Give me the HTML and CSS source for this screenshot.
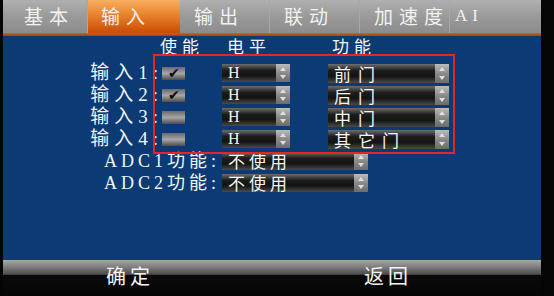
FILE: index.html
```html
<!DOCTYPE html>
<html lang="zh">
<head>
    <meta charset="UTF-8">
    <meta name="viewport" content="width=device-width, initial-scale=1.0">
    <title>输入设置</title>
    <link rel="stylesheet" href="styles.css">
</head>
<body>
    <div class="screen">
        <div class="tabs">
            <div class="tab tab-first">基本</div>
            <div class="tab active">输入</div>
            <div class="tab">输出</div>
            <div class="tab">联动</div>
            <div class="tab">加速度</div>
            <div class="tab tab-last">AI</div>
        </div>
        <div class="tab-line"></div>

        <div class="panel">
            <div class="head-row">
                <span class="head h-enable">使能</span>
                <span class="head h-level">电平</span>
                <span class="head h-func">功能</span>
            </div>

            <div class="row">
                <span class="label">输入1:</span>
                <span class="check on">&#10004;</span>
                <div class="select level"><span>H</span><i class="spin"></i></div>
                <div class="select func"><span>前门</span><i class="spin"></i></div>
            </div>
            <div class="row">
                <span class="label">输入2:</span>
                <span class="check on">&#10004;</span>
                <div class="select level"><span>H</span><i class="spin"></i></div>
                <div class="select func"><span>后门</span><i class="spin"></i></div>
            </div>
            <div class="row">
                <span class="label">输入3:</span>
                <span class="check"></span>
                <div class="select level"><span>H</span><i class="spin"></i></div>
                <div class="select func"><span>中门</span><i class="spin"></i></div>
            </div>
            <div class="row">
                <span class="label">输入4:</span>
                <span class="check"></span>
                <div class="select level"><span>H</span><i class="spin"></i></div>
                <div class="select func"><span>其它门</span><i class="spin"></i></div>
            </div>

            <div class="row adc-row">
                <span class="label adc-label">ADC1功能:</span>
                <div class="select adc"><span>不使用</span><i class="spin"></i></div>
            </div>
            <div class="row adc-row">
                <span class="label adc-label">ADC2功能:</span>
                <div class="select adc"><span>不使用</span><i class="spin"></i></div>
            </div>

            <!-- 红框标注 -->
            <div class="mark"></div>
        </div>

        <div class="footer">
            <span class="btn btn-ok">确定</span>
            <span class="btn btn-back">返回</span>
        </div>
    </div>
</body>
</html>
```

FILE: styles.css
```css
body {
    margin: 0;
    background-color: #050505;
    font-family: "Liberation Serif", "Noto Sans CJK SC", serif;
    color: #f4f4f4;
}

.screen {
    width: 538px;
    height: 296px;
    margin-left: 3px;
    overflow: hidden;
}

/* 顶部标签 */
.tabs {
    display: flex;
    height: 33px;
    background: linear-gradient(#b0b0b0, #9a9a9a 50%, #8c8c8c);
}

.tab {
    width: 90px;
    box-sizing: border-box;
    padding-left: 14px;
    border-right: 1px solid #a8a8a8;
    font-size: 19px;
    line-height: 32px;
    letter-spacing: 6px;
    color: #f2f2f2;
    font-family: "Noto Sans CJK SC", sans-serif;
    white-space: nowrap;
}

.tab-first {
    width: 85px;
    padding-left: 21px;
}

.tab.active {
    width: 92px;
    padding-left: 13px;
    background: linear-gradient(#f7b060, #e9822c 45%, #c94c04);
    border-right: none;
}

.tab-last {
    width: 86px;
    padding-left: 5px;
    border-right: none;
    font-family: "Liberation Serif", serif;
    font-size: 17px;
    letter-spacing: 5px;
}

.tab-line {
    height: 3px;
    background: linear-gradient(#d2601e, #a84010);
}

/* 主区域 */
.panel {
    position: relative;
    height: 224px;
    background-color: #0b3a74;
}

.head-row {
    display: flex;
    height: 26px;
    padding-top: 1px;
    box-sizing: border-box;
    font-size: 17px;
    letter-spacing: 5px;
    font-family: "Noto Sans CJK SC", sans-serif;
    line-height: 18px;
}

.h-enable { margin-left: 157px; }
.h-level { margin-left: 23px; }
.h-func { margin-left: 61px; }

.row {
    display: flex;
    align-items: center;
    height: 22px;
}

.label {
    width: 160px;
    margin-right: -5px;
    text-align: right;
    font-size: 19px;
    line-height: 20px;
    letter-spacing: 5px;
    white-space: nowrap;
}

.check {
    width: 23px;
    height: 13px;
    margin-left: 4px;
    background: linear-gradient(#6a6a6a, #a6a6a6 50%, #4c4c4c);
    color: #0a0a0a;
    font-size: 14px;
    line-height: 13px;
    text-align: center;
}

.select {
    display: flex;
    height: 18px;
    box-sizing: border-box;
    background: linear-gradient(#6e6e6e, #1c1c1c 35%, #141414 65%, #4a4a4a);
    font-size: 16px;
    line-height: 18px;
}

.select span {
    flex: 1;
    padding-left: 6px;
    letter-spacing: 4px;
    color: #f6f6f6;
    white-space: nowrap;
}

.spin {
    position: relative;
    width: 14px;
    background: linear-gradient(#bcbcbc, #8a8a8a 50%, #6c6c6c);
}

.spin::before, .spin::after {
    content: "";
    position: absolute;
    left: 4px;
    border-left: 3px solid transparent;
    border-right: 3px solid transparent;
}

.spin::before {
    top: 3px;
    border-bottom: 4px solid #e0e0e0;
}

.spin::after {
    bottom: 3px;
    border-top: 4px solid #e0e0e0;
}

.level {
    width: 68px;
    margin-left: 37px;
}

.func {
    width: 121px;
    height: 19px;
    margin-left: 38px;
}

.func span {
    font-family: "Noto Sans CJK SC", sans-serif;
    font-size: 17px;
    line-height: 19px;
    letter-spacing: 7px;
}

.adc-label {
    width: 217px;
    margin-right: -4px;
    font-size: 18px;
    letter-spacing: 4px;
}

.adc {
    width: 146px;
    margin-left: 6px;
}

.adc span {
    font-family: "Noto Sans CJK SC", sans-serif;
    font-size: 17px;
    letter-spacing: 4px;
}

.mark {
    position: absolute;
    left: 150px;
    top: 18px;
    width: 298px;
    height: 96px;
    border: 2px solid #e8232a;
}

/* 底部按钮 */
.footer {
    display: flex;
    height: 36px;
    background: linear-gradient(#a8a8a8, #7c7c7c 20%, #4a4a4a 40%, #0a0a0a 42%, #050505);
}

.btn {
    text-align: center;
    font-size: 20px;
    letter-spacing: 4px;
    line-height: 32px;
    font-family: "Noto Sans CJK SC", sans-serif;
}

.btn-ok { width: 254px; }
.btn-back { width: 262px; }
```
